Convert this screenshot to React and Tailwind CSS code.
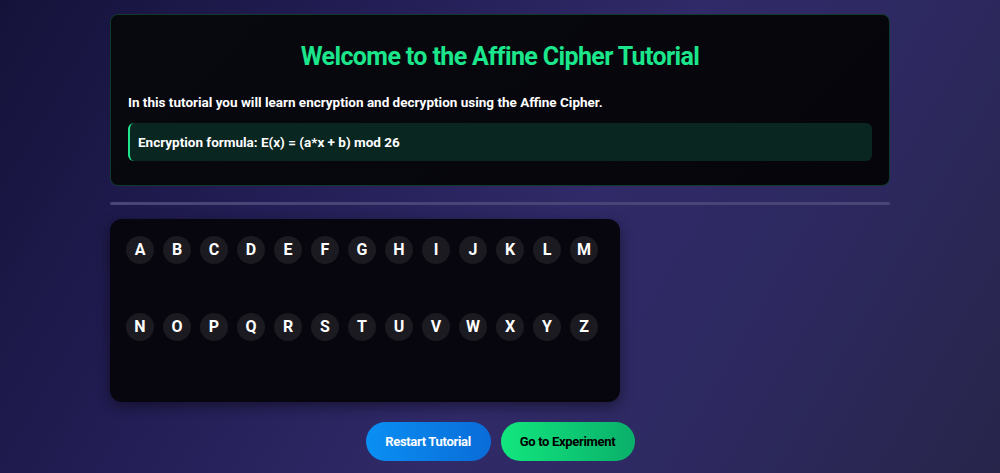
import React from 'react';

const letters = 'ABCDEFGHIJKLMNOPQRSTUVWXYZ'.split('');

const App = () => {
  return (
    <div
      className="min-h-screen w-full bg-[linear-gradient(120deg,#15123a_0%,#231e55_30%,#302a68_55%,#2d2960_75%,#27254a_100%)] pt-[14px] pb-[13px] text-white"
      style={{ fontFamily: 'Roboto, "Liberation Sans", sans-serif' }}
    >
      <div className="mx-auto w-[780px]">
        {/* Intro card */}
        <div className="rounded-lg border border-[#0f3b2d] bg-[linear-gradient(135deg,#08080f,#06050c)] px-[17px] pt-[27px] pb-[24px]">
          <h1 className="text-center text-[25px] font-bold leading-[30px] tracking-tight text-[#1be68b]">
            Welcome to the Affine Cipher Tutorial
          </h1>
          <p className="mt-[21px] text-[13.5px] font-bold leading-[18px]">
            In this tutorial you will learn encryption and decryption using the Affine Cipher.
          </p>
          <div className="mt-[12px] rounded-md border-l-2 border-[#1fe58c] bg-[#0a2620] px-[8px] py-[10px]">
            <p className="text-[13.5px] font-bold leading-[18px]">
              Encryption formula: E(x) = (a*x + b) mod 26
            </p>
          </div>
        </div>

        <div className="mt-[16px] h-[3px] rounded-full bg-[#4a4477]" />

        {/* Alphabet */}
        <div className="mt-[14px] h-[183px] w-[510px] rounded-xl bg-[#07060e] pl-[16px] pt-[17px] shadow-[0_4px_14px_rgba(0,0,0,0.45)]">
          <div className="grid grid-cols-[repeat(13,28px)] gap-x-[9px] gap-y-[49px]">
            {letters.map((l) => (
              <div
                key={l}
                className="flex h-[28px] w-[28px] items-center justify-center rounded-full bg-[#1b1a21] text-[16px] font-bold"
              >
                {l}
              </div>
            ))}
          </div>
        </div>

        {/* Actions */}
        <div className="mt-[20px] flex justify-center gap-[10px]">
          <button className="h-[39px] w-[125px] rounded-full bg-[linear-gradient(90deg,#0a8ff2,#0a6cd8)] text-[13px] font-bold tracking-tight text-white">
            Restart Tutorial
          </button>
          <button className="h-[39px] w-[134px] rounded-full bg-[linear-gradient(90deg,#12e67e,#0ab06a)] text-[13px] font-bold tracking-tight text-black">
            Go to Experiment
          </button>
        </div>
      </div>
    </div>
  );
};

export default App;
